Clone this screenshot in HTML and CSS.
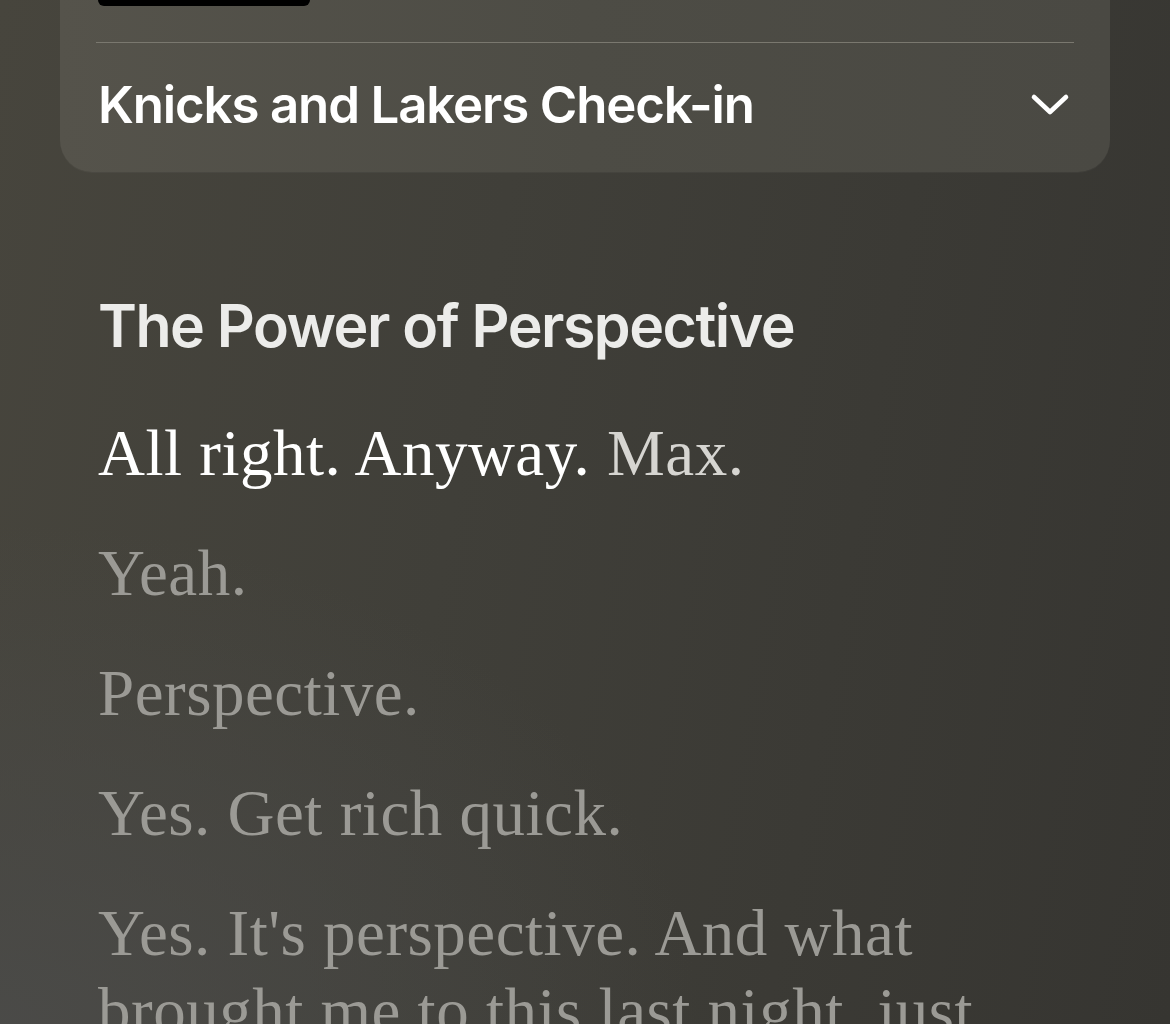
FILE: index.html
```html
<!DOCTYPE html>
<html lang="en">
<head>
<meta charset="utf-8">
<title>Transcript</title>
<link rel="stylesheet" href="styles.css">
</head>
<body>
<div class="screen">
  <section class="card">
    <div class="art"></div>
    <div class="divider"></div>
    <div class="card-row">
      <span class="card-title">Knicks and Lakers Check-in</span>
      <svg class="chevron" width="40" height="26" viewBox="0 0 40 26" aria-hidden="true">
        <path d="M4 5 L20 20 L36 5" fill="none" stroke="#ffffff" stroke-width="4.6" stroke-linecap="round" stroke-linejoin="round"/>
      </svg>
    </div>
  </section>
  <main class="transcript">
    <h1 class="heading">The Power of Perspective</h1>
    <p class="line"><span class="spoken">All right. Anyway.</span> <span class="current">Max.</span></p>
    <p class="line">Yeah.</p>
    <p class="line">Perspective.</p>
    <p class="line">Yes. Get rich quick.</p>
    <p class="line">Yes. It's perspective. And what brought me to this last night, just</p>
  </main>
</div>
</body>
</html>
```
FILE: styles.css
```css
html, body {
  margin: 0;
  padding: 0;
  height: 100%;
}
body {
  overflow: hidden;
  background: #3c3b36;
}
.screen {
  width: 1170px;
  height: 1024px;
  overflow: hidden;
  background:
    radial-gradient(ellipse 700px 500px at 0% 100%, rgba(75, 75, 73, 0.9), rgba(75, 75, 73, 0) 100%),
    linear-gradient(100deg, #47453d 0%, #403f39 40%, #363531 100%);
}
.card {
  margin: 0 60px;
  border-radius: 0 0 32px 32px;
  background: linear-gradient(90deg, #55534b 0%, #4d4c45 50%, #4a4943 100%);
  box-shadow: 0 1px 0 rgba(255,255,255,0.03);
  padding: 0 36px 0 36px;
}
.art {
  width: 212px;
  height: 6px;
  margin-left: 2px;
  background: #000;
  border-radius: 0 0 12px 12px;
}
.divider {
  margin-top: 36px;
  height: 1px;
  background: #7a786f;
}
.card-row {
  height: 129px;
  display: flex;
  align-items: center;
  justify-content: space-between;
}
.card-title {
  font-family: "Inter", "Noto Sans", sans-serif;
  font-weight: 600;
  font-size: 51px;
  letter-spacing: -1.15px;
  color: #ffffff;
  padding-left: 2px;
  margin-top: -7px;
}
.chevron {
  display: block;
  margin-right: 4px;
  margin-top: -6px;
}
.transcript {
  padding: 118px 98px 0 98px;
}
.heading {
  margin: 0;
  font-family: "Inter", "Noto Sans", sans-serif;
  font-weight: 600;
  font-size: 59px;
  line-height: 72px;
  letter-spacing: -1.5px;
  color: #ececea;
}
.line {
  margin: 52px 0 0 0;
  font-family: "Liberation Serif", "Times New Roman", serif;
  font-size: 65px;
  line-height: 78px;
  letter-spacing: 0.5px;
  color: #9b9a95;
}
.line + .line {
  margin-top: 42px;
}
.spoken {
  color: #ffffff;
}
.current {
  color: #d6d5d1;
}
```
